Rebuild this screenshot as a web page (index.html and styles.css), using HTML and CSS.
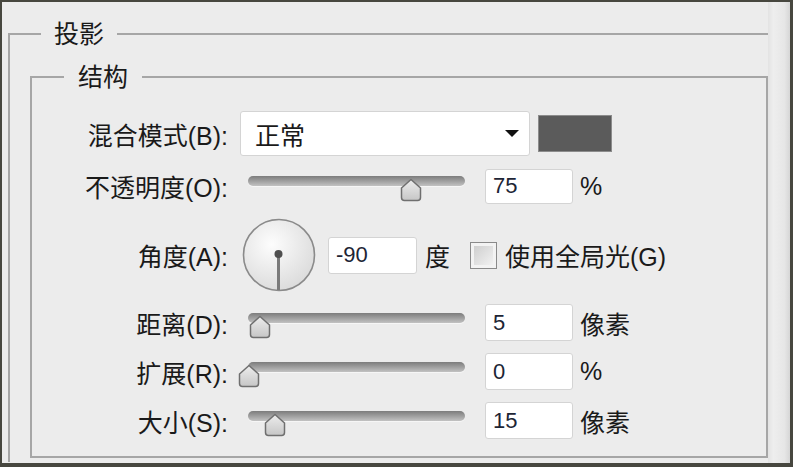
FILE: index.html
```html
<!DOCTYPE html>
<html>
<head>
  <meta charset="utf-8">
  <title>图层样式 - 投影</title>
  <link rel="stylesheet" href="styles.css">
</head>
<body>

<svg class="defs" width="0" height="0">
  <defs>
    <linearGradient id="thumbFill" x1="0" y1="0" x2="0" y2="1">
      <stop offset="0" stop-color="#ededed"/>
      <stop offset="1" stop-color="#c6c6c6"/>
    </linearGradient>
    <radialGradient id="dialFill" cx="0.4" cy="0.35" r="0.7">
      <stop offset="0" stop-color="#fdfdfd"/>
      <stop offset="1" stop-color="#dadada"/>
    </radialGradient>
    <symbol id="thumb" viewBox="0 0 24 24">
      <path d="M12 1.5 L21.5 10 V19.5 Q21.5 22.5 18.5 22.5 H5.5 Q2.5 22.5 2.5 19.5 V10 Z" fill="url(#thumbFill)" stroke="#6f6f6f" stroke-width="1.5" stroke-linejoin="round"/>
    </symbol>
  </defs>
</svg>

<div class="frame">
  <div class="panel">
    <fieldset class="group outer">
      <legend>投影</legend>

      <fieldset class="group inner">
        <legend>结构</legend>

        <div class="row row-blend">
          <label class="label">混合模式(B):</label>
          <div class="select">
            <span>正常</span>
            <i class="arrow"></i>
          </div>
          <div class="swatch"></div>
        </div>

        <div class="row row-opacity">
          <label class="label">不透明度(O):</label>
          <div class="slider">
            <div class="track"></div>
            <svg class="thumb" style="left:159px"><use href="#thumb"/></svg>
          </div>
          <input class="field" type="text" value="75">
          <span class="unit">%</span>
        </div>

        <div class="row row-angle">
          <label class="label">角度(A):</label>
          <svg class="dial" viewBox="0 0 74 74">
            <circle cx="37" cy="37" r="35.5" fill="url(#dialFill)" stroke="#8a8a8a" stroke-width="1.6"/>
            <line x1="36.5" y1="36" x2="36.5" y2="72" stroke="#7a7a7a" stroke-width="3"/>
            <circle cx="36.5" cy="36" r="4" fill="#4f4f4f"/>
          </svg>
          <input class="field angle" type="text" value="-90">
          <span class="unit deg">度</span>
          <span class="check"></span>
          <span class="check-label">使用全局光(G)</span>
        </div>

        <div class="row row-distance">
          <label class="label">距离(D):</label>
          <div class="slider">
            <div class="track"></div>
            <svg class="thumb" style="left:8px"><use href="#thumb"/></svg>
          </div>
          <input class="field" type="text" value="5">
          <span class="unit">像素</span>
        </div>

        <div class="row">
          <label class="label">扩展(R):</label>
          <div class="slider">
            <div class="track"></div>
            <svg class="thumb" style="left:-3px"><use href="#thumb"/></svg>
          </div>
          <input class="field" type="text" value="0">
          <span class="unit">%</span>
        </div>

        <div class="row">
          <label class="label">大小(S):</label>
          <div class="slider">
            <div class="track"></div>
            <svg class="thumb" style="left:23px"><use href="#thumb"/></svg>
          </div>
          <input class="field" type="text" value="15">
          <span class="unit">像素</span>
        </div>

      </fieldset>
    </fieldset>
  </div>
  <div class="edge"></div>
</div>

</body>
</html>
```

FILE: styles.css
```css
body {
  margin: 0;
  padding: 2px 3px 4px 2px;
  background: #47473f;
  font-family: "Liberation Sans", "Noto Sans CJK SC", sans-serif;
  font-size: 25px;
  color: #1a1a1a;
}
.defs {
  position: absolute;
}
.frame {
  display: flex;
  height: 461px;
  background: #ececec;
}
.panel {
  width: 766px;
  flex-shrink: 0;
  box-sizing: border-box;
  padding: 17px 0 0 6px;
  overflow: hidden;
}
.edge {
  flex: 1;
  background: linear-gradient(to right, #e3e3e3, #eeeeee 25%, #e6e6e6 75%, #d6d6d6);
}

/* Group boxes */
.group {
  margin: 0;
  min-width: 0;
  border: 2px solid #a6a6a6;
}
.group legend {
  padding: 0 13px;
  line-height: 30px;
}
.outer {
  border-width: 2px 0 0 2px;
  padding: 13px 0 4px 20px;
}
.outer > legend {
  margin-left: 11px;
}
.inner {
  padding: 19px 0 17px 0;
}
.inner > legend {
  margin-left: 32px;
  padding: 0 14px;
}

/* Rows */
.row {
  display: flex;
  align-items: center;
  margin-top: 12px;
}
.row-blend {
  margin-top: 0;
}
.row-angle {
  margin-top: 14px;
}
.label {
  width: 196px;
  flex-shrink: 0;
  text-align: right;
  white-space: nowrap;
}

/* Blend mode */
.select {
  display: flex;
  align-items: center;
  justify-content: space-between;
  width: 290px;
  height: 45px;
  box-sizing: border-box;
  margin-left: 12px;
  padding: 0 10px 0 14px;
  background: #fff;
  border: 1px solid #d4d4d4;
  border-radius: 3px;
}
.arrow {
  width: 0;
  height: 0;
  border-left: 7px solid transparent;
  border-right: 7px solid transparent;
  border-top: 7px solid #111;
}
.swatch {
  width: 74px;
  height: 37px;
  box-sizing: border-box;
  margin-left: 8px;
  background: #5b5b5b;
  border: 1px solid #8c8c8c;
}

/* Sliders */
.slider {
  position: relative;
  width: 233px;
  height: 34px;
  margin-left: 12px;
}
.track {
  height: 10px;
  margin: 7px 8px 0;
  border-radius: 5px;
  background: linear-gradient(#7c7c7c, #a2a2a2 55%, #c2c2c2);
  box-shadow: 0 1px 0 #f6f6f6;
}
.thumb {
  position: absolute;
  top: 9px;
  width: 24px;
  height: 24px;
}

/* Inputs */
.field {
  width: 88px;
  height: 37px;
  box-sizing: border-box;
  margin: 0 0 0 12px;
  padding: 0 0 0 7px;
  background: #fff;
  border: 1px solid #d4d4d4;
  border-radius: 3px;
  font-family: "Liberation Sans", sans-serif;
  font-size: 22px;
  color: #1d2535;
  outline: none;
}
.row-opacity .field {
  height: 35px;
}
.field.angle {
  width: 89px;
  margin-left: 12px;
}
.unit {
  margin-left: 7px;
}
.unit.deg {
  margin-left: 8px;
}

/* Angle */
.dial {
  width: 74px;
  height: 74px;
  margin-left: 14px;
}
.check {
  width: 27px;
  height: 27px;
  box-sizing: border-box;
  margin-left: 20px;
  border: 1px solid #8a8a8a;
  background: linear-gradient(135deg, #c9c9c9, #f7f7f7);
  box-shadow: inset 0 0 0 3px #f3f3f3;
}
.check-label {
  margin-left: 8px;
  white-space: nowrap;
}
```
